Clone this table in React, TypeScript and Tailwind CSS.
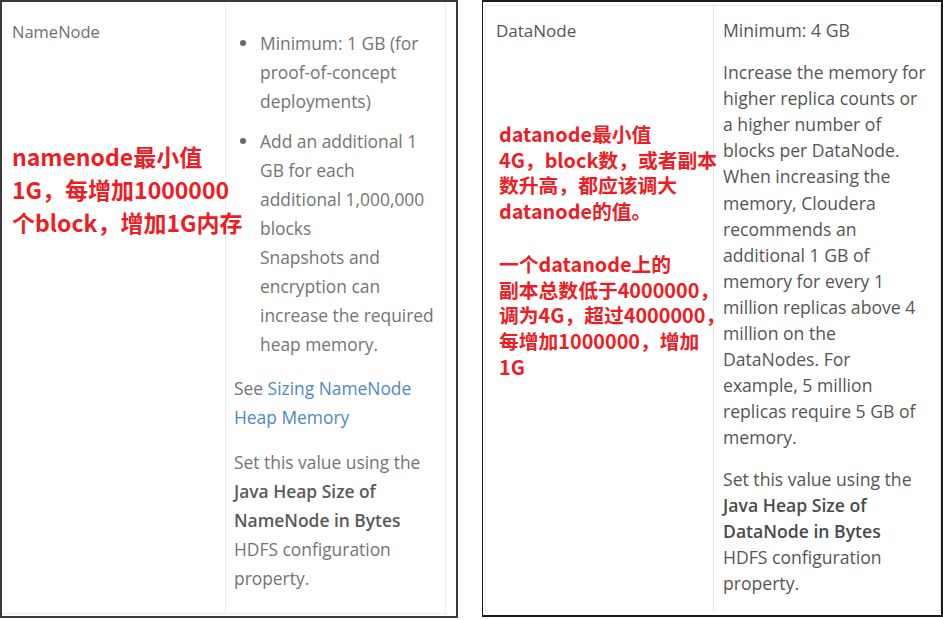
const textFont = { fontFamily: "'Open Sans', Lato, sans-serif" };
const cjk = { fontFamily: "'Noto Sans CJK SC', 'Noto Sans', sans-serif" };

function Bullet({ children }: { children: React.ReactNode }) {
  return (
    <div className="flex">
      <div className="w-[34px] shrink-0 pl-[14px] pt-[11px]">
        <div className="h-[6px] w-[6px] rounded-full bg-[#666]"></div>
      </div>
      <div>{children}</div>
    </div>
  );
}

function NameNodePanel() {
  return (
    <div className="h-[618px] w-[458px] shrink-0 border-2 border-[#3a3a3a] bg-white" style={textFont}>
      <div className="flex h-[612px] w-[444px] border-r border-b border-[#ececec]">
        <div className="w-[224px] shrink-0 border-r border-[#ececec] pl-[10px] pt-[17px]">
          <div className="text-[16.5px] leading-[26px] text-[#707070]">NameNode</div>
          <div
            className="mt-[95px] whitespace-nowrap text-[23px] font-bold leading-[33px] text-[#f01c24]"
            style={cjk}
          >
            <div>namenode最小值</div>
            <div>1G，每增加1000000</div>
            <div>个block，增加1G内存</div>
          </div>
        </div>
        <div className="flex-1 pt-[27px] text-[17.4px] leading-[29px] text-[#747474]">
          <Bullet>
            Minimum: 1 GB (for
            <br />
            proof-of-concept
            <br />
            deployments)
          </Bullet>
          <div className="mt-[11px]">
            <Bullet>
              Add an additional 1
              <br />
              GB for each
              <br />
              additional 1,000,000
              <br />
              blocks
              <br />
              Snapshots and
              <br />
              encryption can
              <br />
              increase the required
              <br />
              heap memory.
            </Bullet>
          </div>
          <div className="mt-[15px] pl-[8px]">
            See <span className="text-[#5088c6]">Sizing NameNode</span>
            <br />
            <span className="text-[#5088c6]">Heap Memory</span>
          </div>
          <div className="mt-[16px] pl-[8px]">
            Set this value using the
            <br />
            <span className="font-semibold text-[#5a5a5a]">Java Heap Size of</span>
            <br />
            <span className="font-semibold text-[#5a5a5a]">NameNode in Bytes</span>
            <br />
            HDFS configuration
            <br />
            property.
          </div>
        </div>
      </div>
    </div>
  );
}

function DataNodePanel() {
  return (
    <div
      className="h-[617px] w-[461px] shrink-0 border-l border-t-2 border-r-2 border-b-2 border-[#1a1a1a] bg-white pt-[3px] pl-[2px]"
      style={textFont}
    >
      <div className="flex h-[607px] border-t border-l border-r border-[#e6e6e6]">
        <div className="w-[228px] shrink-0 border-r border-[#e6e6e6] pl-[10px] pt-[12px]">
          <div className="text-[17px] leading-[26px] text-[#555]">DataNode</div>
          <div
            className="mt-[77px] whitespace-nowrap pl-[3px] text-[19.8px] font-bold leading-[25.7px] text-[#f01c24]"
            style={cjk}
          >
            <div>datanode最小值</div>
            <div>4G，block数，或者副本</div>
            <div>数升高，都应该调大</div>
            <div>datanode的值。</div>
            <div className="h-[27px]"></div>
            <div>一个datanode上的</div>
            <div>副本总数低于4000000，</div>
            <div>调为4G，超过4000000，</div>
            <div>每增加1000000，增加</div>
            <div>1G</div>
          </div>
        </div>
        <div className="flex-1 pl-[9px] pt-[11px] text-[17.6px] leading-[26.1px] text-[#555]">
          <div>Minimum: 4 GB</div>
          <div className="mt-[16px]">
            Increase the memory for
            <br />
            higher replica counts or
            <br />
            a higher number of
            <br />
            blocks per DataNode.
            <br />
            When increasing the
            <br />
            memory, Cloudera
            <br />
            recommends an
            <br />
            additional 1 GB of
            <br />
            memory for every 1
            <br />
            million replicas above 4
            <br />
            million on the
            <br />
            DataNodes. For
            <br />
            example, 5 million
            <br />
            replicas require 5 GB of
            <br />
            memory.
          </div>
          <div className="mt-[15px]">
            Set this value using the
            <br />
            <span className="font-semibold text-[#4a4a4a]">Java Heap Size of</span>
            <br />
            <span className="font-semibold text-[#4a4a4a]">DataNode in Bytes</span>
            <br />
            HDFS configuration
            <br />
            property.
          </div>
        </div>
      </div>
    </div>
  );
}

export default function App() {
  return (
    <div className="flex h-[620px] w-[943px] gap-[24px] bg-white">
      <NameNodePanel />
      <DataNodePanel />
    </div>
  );
}
